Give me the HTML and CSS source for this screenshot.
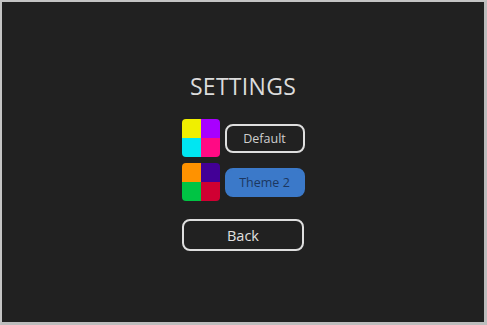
FILE: index.html
```html
<!DOCTYPE html>
<html lang="en">
<head>
  <meta charset="UTF-8">
  <title>Settings</title>
  <link rel="stylesheet" href="styles.css">
</head>
<body>
  <div class="window">
    <div class="menu">
      <h1>SETTINGS</h1>
      <div class="theme-row">
        <div class="swatch">
          <span style="background:#f0ef00"></span>
          <span style="background:#a800ff"></span>
          <span style="background:#00e6f2"></span>
          <span style="background:#ff0a84"></span>
        </div>
        <button class="btn">Default</button>
      </div>
      <div class="theme-row">
        <div class="swatch">
          <span style="background:#ff9200"></span>
          <span style="background:#420096"></span>
          <span style="background:#00c444"></span>
          <span style="background:#d00032"></span>
        </div>
        <button class="btn selected">Theme 2</button>
      </div>
      <button class="btn back">Back</button>
    </div>
  </div>
</body>
</html>
```

FILE: styles.css
```css
html, body {
  margin: 0;
  height: 100%;
}
body {
  font-family: "Open Sans", "DejaVu Sans", sans-serif;
  background: #c4c4c4;
}
.window {
  box-sizing: border-box;
  height: 100%;
  margin: 0;
  border-top: 2px solid #c4c4c4;
  border-left: 2px solid #c4c4c4;
  border-right: 3px solid #bdbdbd;
  border-bottom: 3px solid #bdbdbd;
  background: #212121;
  display: flex;
  justify-content: center;
  align-items: flex-start;
}
.menu {
  width: 123px;
  margin-top: 68px;
  display: flex;
  flex-direction: column;
  align-items: center;
}
h1 {
  margin: 0 0 17px;
  font-weight: 400;
  font-size: 23px;
  letter-spacing: 0.3px;
  color: #dcdcdc;
  white-space: nowrap;
}
.theme-row {
  display: flex;
  align-items: center;
  gap: 5px;
  margin-bottom: 6px;
}
.swatch {
  width: 38px;
  height: 38px;
  border-radius: 4px;
  overflow: hidden;
  display: grid;
  grid-template-columns: 1fr 1fr;
  grid-template-rows: 1fr 1fr;
}
.btn {
  box-sizing: border-box;
  width: 80px;
  height: 29px;
  border: 2px solid #dedede;
  border-radius: 8px;
  background: transparent;
  color: #cfcfcf;
  font-family: inherit;
  font-size: 12.5px;
  padding: 0;
}
.btn.selected {
  border-color: #3b79c9;
  background: #3b79c9;
  color: #1c3760;
}
.back {
  width: 122px;
  height: 32px;
  margin-top: 12px;
  font-size: 14.5px;
  color: #e0e0e0;
}
```
